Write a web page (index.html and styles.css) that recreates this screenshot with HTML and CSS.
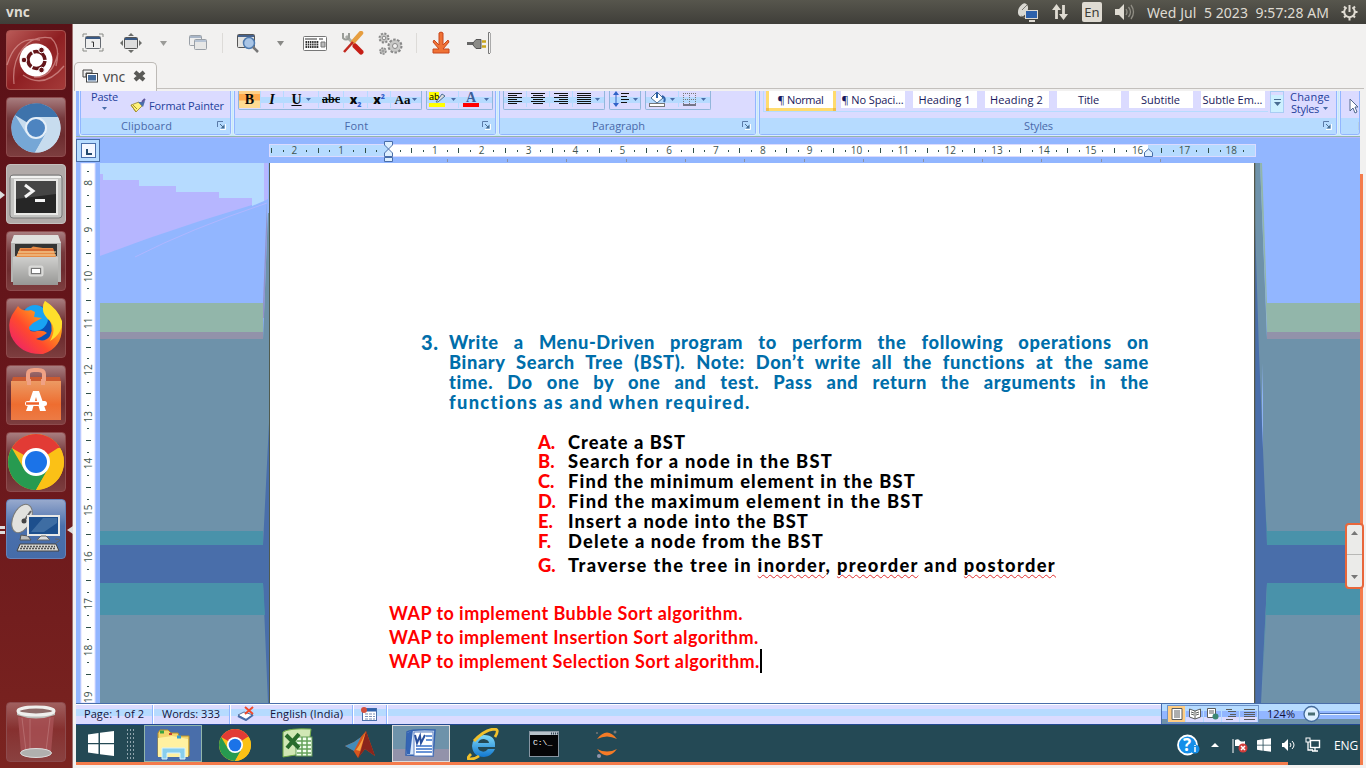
FILE: index.html
```html
<!DOCTYPE html>
<html lang="en">
<head>
<meta charset="utf-8">
<title>vnc</title>
<link rel="stylesheet" href="styles.css">
</head>
<body>
<svg width="0" height="0" class="defs">
  <defs>
    <linearGradient id="steel" x1="0" y1="0" x2="0" y2="1"><stop stop-color="#cfcfcd"/><stop offset="1" stop-color="#979795"/></linearGradient>
    <linearGradient id="bag" x1="0" y1="0" x2="0" y2="1"><stop stop-color="#ec9a63"/><stop offset=".6" stop-color="#ee6d30"/><stop offset="1" stop-color="#ec7b45"/></linearGradient>
    <linearGradient id="fox" x1="0" y1="1" x2="1" y2="0"><stop stop-color="#e8147f"/><stop offset=".4" stop-color="#ff4a2d"/><stop offset=".7" stop-color="#ffa11a"/><stop offset="1" stop-color="#fff04a"/></linearGradient>
    <linearGradient id="blue" x1="0" y1="0" x2="0" y2="1"><stop stop-color="#7fd9f8"/><stop offset="1" stop-color="#1178d0"/></linearGradient>
    <symbol id="chrome" viewBox="0 0 56 56">
      <circle cx="28" cy="28" r="28" fill="#f7c01c"/>
      <path d="M28 28 3.8 14A28 28 0 0 1 52.2 14Z" fill="#e23b35"/><path d="M28 14H52.2L28 28Z" fill="#e23b35"/>
      <path d="M3.8 14A28 28 0 0 0 28 56L40 35 28 28 16 35Z" fill="#279a50"/>
      <path d="M28 56 40 35 28 28 50 14H52.2A28 28 0 0 1 28 56Z" fill="#fbc116"/>
      <circle cx="28" cy="28" r="14" fill="#fff"/><circle cx="28" cy="28" r="11" fill="#1b73e8"/>
    </symbol>
    <symbol id="drop" viewBox="0 0 5 3"><path d="M0 0H5L2.5 3Z" fill="#496eaa"/></symbol>
    <symbol id="launch" viewBox="0 0 9 9"><path d="M.5 6V.5H6" fill="none" stroke="#5a7aa8"/><path d="M3 3 6 6" stroke="#496e92"/><path d="M3 8.500H8.500V3" fill="none" stroke="#fff"/><path d="M7.500 3.500V7.500H3.500Z" fill="#496e92"/></symbol>
    <symbol id="flagwin" viewBox="0 0 26 25"><path d="M0 3.500 10.500 2V12H0ZM12 1.800 26 0V12H12ZM0 13.300H10.500V23L0 21.500ZM12 13.300H26V25L12 23.200Z" fill="#fff"/></symbol>
  </defs>
</svg>

<header class="panel">
  <b class="panel-title fit" data-w="24">vnc</b>
  <div class="indicators">
    <svg width="22" height="20" class="ind-dish"><ellipse cx="6" cy="8" rx="4.500" ry="7" transform="rotate(25 6 8)" fill="#d9d8d2"/><path d="M5 8 10 3M4 14l5 2" stroke="#77766f"/><rect x="8.500" y="8.500" width="12" height="8" fill="#2d61ab" stroke="#dedad2"/><path d="M12 19h6" stroke="#dedad2" stroke-width="2"/></svg>
    <svg width="18" height="16" class="ind-net"><path d="M5.500 15V4M12.500 1v11" stroke="#dfdbd2" stroke-width="2.800"/><path d="M1 6 5.500 0 10 6ZM8 10l4.500 6L17 10Z" fill="#dfdbd2"/></svg>
    <span class="ind-lang">En</span>
    <svg width="21" height="18" class="ind-vol"><path d="M1 6h4l5-5v16l-5-5H1Z" fill="#dfdbd2"/><path d="M12 6q2 3 0 6M14.500 4q4 5 0 10M17 2q5 7 0 14" fill="none" stroke="#8f8d84" stroke-width="1.300"/></svg>
    <span class="clock fit" data-w="182">Wed Jul&nbsp; 5 2023&nbsp; 9:57:28 AM</span>
    <svg width="17" height="18" viewBox="0 0 17 18"><g fill="none" stroke="#dfdbd2"><path d="M5.500 4.500A5.300 5.300 0 1 0 11.500 4.500" stroke-width="2"/><path d="M8.500 2v7" stroke-width="2"/><path d="M.5 9h3M13.500 9h3M3 3.500l2 2M12 5.500l2-2M3 14.500l2-2M12 12.500l2 2M8.500 14v3.500" stroke-width="2"/></g></svg>
  </div>
</header>

<div class="desktop">
  <nav class="launcher">
    <div class="tile dash"><svg width="60" height="60"><g fill="none" stroke="#eab5b0" opacity=".55" stroke-width="1.300"><path d="M8 54C5 25 22 4 45 8Q55 17 50 36M1 35Q10 5 34 10M17 45Q38 60 58 36M28 47Q46 49 52 23"/></g><circle cx="30" cy="30" r="16.500" fill="#fff"/><circle cx="30.500" cy="30" r="8.500" fill="none" stroke="#641519" stroke-width="3.500" stroke-dasharray="16.300 1.500" stroke-dashoffset="-1"/><g fill="#641519" stroke="#fff"><circle cx="18" cy="30" r="2.800"/><circle cx="35.500" cy="20" r="2.800"/><circle cx="35.500" cy="40" r="2.800"/></g></svg></div>
    <div class="tile"><svg width="60" height="60"><circle cx="30" cy="31" r="24.500" fill="#c7dcee"/><path d="M30 31 9 18A24.500 24.500 0 0 1 52 20Z" fill="#3e73ab"/><path d="M9 18A24.500 24.500 0 0 0 29 55.500L40 36 20 36Z" fill="#76a7d6"/><path d="M52 20H30v11l10 5L29 55.500A24.500 24.500 0 0 0 52 20" fill="#c7dcee"/><circle cx="30" cy="31" r="10" fill="#4d84c0" stroke="#e5eff8" stroke-width="2"/></svg></div>
    <div class="tile grey"><i class="pip left"></i><svg width="60" height="60"><rect x="4" y="11" width="52" height="43" rx="3" fill="#c4c4c2" stroke="#777"/><path d="M5 12H55V14H5Z" fill="#f1f1ef"/><rect x="8" y="15" width="44" height="36" fill="#e8e8e6"/><rect x="13.500" y="18.500" width="44" height="35" fill="#262626" transform="translate(0 0)" display="none"/><rect x="14" y="19" width="0" height="0"/><rect x="10" y="17" width="40" height="32" fill="#262626"/><path d="M10 17H50V30L10 35Z" fill="#454545"/><path d="m19 22 8 6-8 6" fill="none" stroke="#f5f5f5" stroke-width="3" transform="translate(0 -1)"/><path d="M29 36.500H39" stroke="#f5f5f5" stroke-width="3"/></svg></div>
    <div class="tile"><svg width="60" height="60"><path d="M8 4H52L55 12V51H5V12Z" fill="#b5b5b3"/><path d="M5 12 8 4H52L55 12Z" fill="#e0e0de"/><path d="M9 13H51V25H9Z" fill="#343434"/><path d="M14 17 25 17 27 15.500 37 17 47 17 50 26H10Z" fill="#e78b45"/><path d="M15 19H48" stroke="#c94f24"/><path d="M12 21H50M11 24H50" stroke="#f3d6a4"/><path d="M7 26H52V54H7Z" fill="url(#steel)"/><rect x="23.500" y="35.500" width="13" height="9" rx="1.500" fill="none" stroke="#dadad8" stroke-width="2"/><rect x="25.500" y="37.500" width="9" height="5" fill="#fff" stroke="#777"/></svg></div>
    <div class="tile"><svg width="60" height="60"><circle cx="31" cy="31" r="23" fill="#0a4fb5"/><circle cx="29" cy="20" r="13" fill="#19a3f3"/><path d="M6 17 12 8Q16 14 25 12L29 14 28 19 36 20 27 25 23 29Q23 35 31 33 38 32 41 35 36 39 30 41 39 45 44 38 49 27 40 17 35 8 39 3 55 14 56 29 56 50 37 56 14 57 5 38 1 26 6 17Z" fill="url(#fox)"/><path d="M39 3Q33 14 44 23 51 31 44 43 57 35 56 23 52 11 39 3Z" fill="#ffdf2b"/></svg></div>
    <div class="tile"><svg width="60" height="60"><path d="M7 12H54L55 18H5Z" fill="#cb5a31"/><path d="M22 20V9Q22 5 28 5H32Q38 5 38 9V20" fill="none" stroke="#f0a184" stroke-width="4"/><path d="M5 16H55V55H5Z" fill="url(#bag)"/><path d="M23 14v6M37 14v6" stroke="#f0a184" stroke-width="4"/><path d="M20 46 27 26H33L40 46H34L30 32 26 46Z" fill="#fff"/><rect x="19" y="36" width="22" height="5" rx="2.500" fill="#fff"/><path d="M20 38.500H33" stroke="#ef6028" stroke-width="2.500"/></svg></div>
    <div class="tile"><svg width="60" height="60"><use href="#chrome" x="2" y="2" width="56" height="56"/></svg></div>
    <div class="tile vnc"><i class="pip left two"></i><i class="pip right"></i><svg width="60" height="60"><path d="M15 36 22 37 25 41H14Z" fill="#bdbdba" stroke="#555"/><ellipse cx="16" cy="19.500" rx="9" ry="15" transform="rotate(25 16 19.500)" fill="#e2e2de" stroke="#7a7a77"/><path d="m18 22 7-10" stroke="#666" stroke-width="2"/><circle cx="18" cy="22" r="2.500" fill="#444"/><rect x="22" y="17" width="31" height="19" fill="#1d4f8d" stroke="#e9e9e7" stroke-width="2"/><path d="m25 33 12-14H51V24L38 33Z" fill="#5a86b7" opacity=".55"/><path d="M31 41 35 37H40L44 41Z" fill="#ddd" stroke="#666"/><path d="M14 45H50L53 52H11Z" fill="#d9d9d5" stroke="#444"/><path d="M15 47.500H49M14 49.500H50" stroke="#555" stroke-width="1.300" stroke-dasharray="2 1"/><path d="M49 40Q58 40 50 44" fill="none" stroke="#666"/></svg></div>
    <div class="tile trash"><svg width="60" height="60"><path d="M12 15H48L45 51Q30 57 15 51Z" fill="#ab5458" opacity=".75"/><path d="M16 16 20 49M24 17v33M44 16 40 49" stroke="#c8898a" opacity=".5"/><ellipse cx="30" cy="51" rx="15.500" ry="4.500" fill="#b0b0ae" stroke="#ddd"/><path d="M11 7V13Q30 20 49 13V7Z" fill="#bcbcb8"/><ellipse cx="30" cy="9" rx="18" ry="4" fill="#8d6b69" stroke="#efefed" stroke-width="3"/></svg></div>
  </nav>

  <main class="window">
    <div class="toolbar">
      <svg width="22" height="20"><path d="M1 4V1H5M17 1h4v3M1 15v3h4M17 18h4v-3" fill="none" stroke="#888a85"/><rect x="3.500" y="3.500" width="15" height="12" rx="1" fill="#eee" stroke="#666b72"/><path d="M4 5H18" stroke="#3b5a84" stroke-width="2"/><path d="M9.500 9h2v5" fill="none" stroke="#333"/></svg>
      <svg width="24" height="20"><rect x="5.500" y="4.500" width="13" height="11" rx="1" fill="#ddd" stroke="#555"/><path d="M6 6H18" stroke="#3b5a84" stroke-width="2"/><path d="M1 10 4 7v6ZM23 10 20 7v6ZM12 0 9 3h6ZM12 20 9 17h6Z" fill="#6d6e6b"/></svg>
      <svg width="7" height="5"><path d="M0 0H7L3.500 5Z" fill="#9b9b98"/></svg>
      <svg width="20" height="18"><rect x="1.500" y="1.500" width="12" height="10" rx="1" fill="#eee" stroke="#9aa0a7"/><path d="M2 3H13" stroke="#a8b5c7" stroke-width="2"/><rect x="6.500" y="5.500" width="12" height="10" rx="1" fill="#e7e7e6" stroke="#9aa0a7"/><path d="M7 7H18" stroke="#b6c3d4" stroke-width="2"/></svg>
      <i class="tool-sep"></i>
      <svg width="24" height="20"><rect x="1.500" y="1.500" width="17" height="13" rx="1" fill="#e3e3e1" stroke="#555"/><path d="M2 3H18" stroke="#45618b" stroke-width="2"/><circle cx="13" cy="10" r="5.500" fill="#a9c5e6" stroke="#507cb0" stroke-width="1.500"/><path d="m17 14 5 5" stroke="#777" stroke-width="2.500"/></svg>
      <svg width="7" height="5"><path d="M0 0H7L3.500 5Z" fill="#898986"/></svg>
      <svg width="24" height="15"><rect x=".5" y=".5" width="23" height="14" rx="1" fill="#fff" stroke="#777"/><path d="M2 3H14M16 3H20" stroke="#333"/><path d="M2.500 6H16M2.500 8.500H16M2.500 11H16" stroke="#333" stroke-width="1.800" stroke-dasharray="1.500 .7"/><path d="M18 6h4v5h-4Z" fill="#bbb" stroke="#777"/></svg>
      <svg width="24" height="24"><path d="m5 5 13 13" stroke="#a9aca7" stroke-width="3"/><path d="M2 2v5q3 3 6 0V2" fill="none" stroke="#999c97" stroke-width="2"/><path d="m12 11 8-9" stroke="#e69e40" stroke-width="4.500" stroke-linecap="round"/><path d="M12 11 3 21" stroke="#c2281e" stroke-width="2.500"/><path d="m14 15 6 6" stroke="#c61e16" stroke-width="5" stroke-linecap="round"/></svg>
      <svg width="26" height="25"><g fill="#c8c8c6" stroke="#888" stroke-width="1"><circle cx="7" cy="7" r="4.500" stroke-width="2" stroke-dasharray="2 1.500"/><circle cx="18" cy="15" r="6.500" stroke-width="2" stroke-dasharray="2.500 1.500"/><circle cx="6" cy="20" r="3" stroke-width="1.500" stroke-dasharray="2 1"/></g><g fill="#f2f1f0" stroke="#888"><circle cx="7" cy="7" r="1.800"/><circle cx="18" cy="15" r="2.500"/><circle cx="6" cy="20" r="1"/></g></svg>
      <i class="tool-sep"></i>
      <svg width="20" height="24"><path d="M8 2Q10 0 12 2V14L17 9 18 11 12 18H18V22H2V18H8L2 11 3 9 8 14Z" fill="#ef7235" stroke="#c8471c"/></svg>
      <svg width="26" height="24"><path d="M1 12.500H8" stroke="#666" stroke-width="3"/><path d="M7 12 10 8.500H15V17.500H10L7 14Z" fill="#8b8b87" stroke="#555"/><path d="M16 10.500h4M16 15.500h4" stroke="#c9a51c" stroke-width="2.500"/><path d="M24 1.500H22.500V22.500H24" fill="none" stroke="#777"/><path d="M24.500 2V22" stroke="#aaa"/></svg>
    </div>

    <div class="tabs"><div class="tab">
      <svg width="17" height="14"><path d="M1 1H10V4H4V8H1Z" fill="#eee" stroke="#444"/><rect x="4.500" y="4.500" width="11" height="8.500" fill="#456c9c" stroke="#444"/><rect x="5.500" y="5.500" width="9" height="6.500" fill="none" stroke="#fff"/></svg>
      <span class="fit" data-w="22">vnc</span>
      <svg width="13" height="12" class="close"><path d="m2 2 9 8M11 2 2 10" stroke="#5a5a57" stroke-width="4"/></svg>
    </div><div class="tabline"></div></div>

    <section class="remote">
      <div class="ribbon">
        <div class="group clipboard"><div class="body">
          <div class="paste"><span class="fit" data-w="27">Paste</span><svg width="5" height="3"><use href="#drop"/></svg></div>
          <svg width="17" height="15" class="brush"><path d="m9 4 3 4-6 6-5-7Z" fill="#fff27a" stroke="#a8984b"/><path d="m3 7 4 4M1 7l5 7" stroke="#a59129"/><path d="m8 4 5 5 2-6-3 1Z" fill="#496eaa"/><path d="m12 4 3-3" stroke="#5c559c" stroke-width="2"/></svg>
          <span class="fp fit" data-w="75">Format Painter</span>
        </div><div class="caption"><span class="fit" data-w="51">Clipboard</span><svg class="dlg"><use href="#launch"/></svg></div></div>

        <div class="group font"><div class="body">
          <div class="bbox">
            <span class="cell serif hot w22"><b>B</b></span><span class="cell serif w23"><i><b>I</b></i></span><span class="cell serif w35"><b><u>U</u></b><svg width="5" height="3"><use href="#drop"/></svg></span><span class="cell serif small w25"><s>abc</s></span><span class="cell small w24"><b>x<sub>2</sub></b></span><span class="cell small w23"><b>x<sup>2</sup></b></span><span class="cell serif aa w30"><b>Aa</b><svg width="5" height="3"><use href="#drop"/></svg></span>
          </div>
          <div class="bbox">
            <span class="cell w32"><svg width="18" height="18"><rect width="10" height="8" y="1" fill="#ff0"/><text x="0" y="9" font-size="9" font-family="Noto Sans">ab</text><path d="m7 11 6-8 3 2-7 6Z" fill="#ddd" stroke="#496e92"/><rect y="12" width="16" height="4" fill="#ff0"/></svg><svg width="5" height="3"><use href="#drop"/></svg></span><span class="cell w33"><svg width="18" height="18"><text x="4" y="11" font-size="14" font-weight="bold" font-family="Liberation Serif" fill="#3d5f9a">A</text><rect x="1" y="12" width="16" height="4" fill="#f00"/></svg><svg width="5" height="3"><use href="#drop"/></svg></span>
          </div>
        </div><div class="caption"><span class="fit" data-w="24">Font</span><svg class="dlg"><use href="#launch"/></svg></div></div>

        <div class="group para"><div class="body">
          <div class="bbox">
            <span class="cell w23"><svg width="14" height="14"><path d="M0 1.500H14M0 3.500H9M0 5.500H14M0 7.500H9M0 9.500H14M0 11.500H9"/></svg></span><span class="cell w23"><svg width="14" height="14"><path d="M0 1.500H14M2 3.500H12M0 5.500H14M2 7.500H12M0 9.500H14M2 11.500H12"/></svg></span><span class="cell w23"><svg width="14" height="14"><path d="M0 1.500H14M5 3.500H14M0 5.500H14M5 7.500H14M0 9.500H14M5 11.500H14"/></svg></span><span class="cell w31"><svg width="14" height="14"><path d="M0 1.500H14M0 3.500H14M0 5.500H14M0 7.500H14M0 9.500H14M0 11.500H14"/></svg><svg width="5" height="3"><use href="#drop"/></svg></span>
          </div>
          <div class="bbox"><span class="cell w30"><svg width="16" height="16"><path d="M8 2.500H16M8 5.500H14M8 8.500H16M8 11.500H14"/><path d="M3 3V13" style="stroke:#3163c8"/><path d="M0 4 3 0 6 4ZM0 12l3 4 3-4Z" fill="#3163c8" style="stroke:none"/></svg><svg width="5" height="3"><use href="#drop"/></svg></span></div>
          <div class="bbox"><span class="cell w33"><svg width="17" height="16"><path d="m2 7 6-6 6 6-6 5Z" fill="#fff" style="stroke:#496e92"/><path d="m8 1 0 6M13 5q4 2 2 6" fill="none" style="stroke:#3163aa;stroke-width:2"/><rect x=".5" y="12.500" width="15" height="3" fill="#fff" style="stroke:#777"/></svg><svg width="5" height="3"><use href="#drop"/></svg></span><span class="cell w31"><svg width="14" height="14"><path d="M.5 1V13M6.500 1V13M12.500 1V13M0 1.500H13M0 7.500H13" stroke-dasharray="1 1" style="stroke:#777"/><path d="M0 13H13"/></svg><svg width="5" height="3"><use href="#drop"/></svg></span></div>
        </div><div class="caption"><span class="fit" data-w="53">Paragraph</span><svg class="dlg"><use href="#launch"/></svg></div></div>

        <div class="group styles"><div class="body">
          <div class="gallery">
            <span class="style chosen"><span class="fit" data-w="46">¶ Normal</span></span><span class="style"><span class="fit" data-w="62">¶ No Spaci...</span></span><span class="style"><span class="fit" data-w="52">Heading 1</span></span><span class="style"><span class="fit" data-w="53">Heading 2</span></span><span class="style"><span class="fit" data-w="21">Title</span></span><span class="style"><span class="fit" data-w="39">Subtitle</span></span><span class="style"><span class="fit" data-w="60">Subtle Em...</span></span>
          </div>
          <span class="more"><svg width="7" height="7"><path d="M0 .5H7" stroke="#496e92"/><path d="M0 3H7L3.500 7Z" fill="#496e92"/></svg></span>
          <div class="change"><span class="fit" data-w="40">Change</span><div><span class="fit" data-w="28">Styles</span><svg width="5" height="3"><use href="#drop"/></svg></div></div>
        </div><div class="caption"><span class="fit" data-w="29">Styles</span><svg class="dlg"><use href="#launch"/></svg></div></div>

        <div class="group editing"><div class="body"><svg width="10" height="16"><path d="M1 1V13L4 10 6 15 8 14 6 9H9Z" fill="#fff" stroke="#53688d"/></svg></div><div class="caption">Editing</div></div>
      </div>

      <div class="hrule-row"><span class="tabstop"><i></i></span><svg id="hrule" width="1260" height="24"></svg></div>

      <div class="workspace">
        <svg id="vrule" width="24" height="540"></svg>
        <svg width="170" height="540" class="wall">
          <rect width="170" height="540" fill="#92b6ff"/>
          <path d="M0 0H164V38L152 43V35H119V29H76V23H39V17H3V11H0Z" fill="#b6dbff"/>
          <path d="M0 11H3V17H39V23H76V29H119V35H152V42L100 58Q50 74 0 93Z" fill="#b6b6ff"/>
          <path d="M164 0H168V36L164 38Z" fill="#b6b6ff"/>
          <path d="M35 94Q90 66 167 40" stroke="#b6b6ff" fill="none" stroke-width=".8"/>
          <rect y="140" width="163" height="29" fill="#92b6aa"/><rect y="169" width="163" height="7" fill="#9292aa"/>
          <path d="M0 176H163L168 50H170V540H0Z" fill="#6e92aa"/>
          <path d="M163 140 167 38V70L164 155H163Z" fill="#9292ca"/>
          <path d="M0 368H163V382H0Z" fill="#4992aa"/>
          <path d="M0 382H163L169 260V540H168L163 420H0Z" fill="#496eaa"/>
          <path d="M0 420H163L165 452H0Z" fill="#4992aa"/>
          <path d="M169.500 0V540" stroke="#505b50"/>
        </svg>
        <article class="page">
          <div class="question"><span class="num">3.</span>
            <div class="prompt"><p>Write a Menu-Driven program to perform the following operations on</p><p>Binary Search Tree (BST). Note: Don’t write all the functions at the same</p><p>time. Do one by one and test. Pass and return the arguments in the</p><p class="last"><span class="fit" data-w="302">functions as and when required.</span></p></div>
          </div>
          <div class="ops">
            <div><b>A.</b><span class="fit" data-w="118">Create a BST</span></div>
            <div class="tight"><b>B.</b><span class="fit" data-w="265">Search for a node in the BST</span></div>
            <div><b>C.</b><span class="fit" data-w="348">Find the minimum element in the BST</span></div>
            <div><b>D.</b><span class="fit" data-w="356">Find the maximum element in the BST</span></div>
            <div><b>E.</b><span class="fit" data-w="241">Insert a node into the BST</span></div>
            <div><b>F.</b><span class="fit" data-w="256">Delete a node from the BST</span></div>
            <div class="loose"><b>G.</b><span class="fit" data-w="488">Traverse the tree in <span class="typo">inorder</span>, <span class="typo">preorder</span> and <span class="typo">postorder</span></span></div>
          </div>
          <div class="wap">
            <div><span class="fit" data-w="354">WAP to implement Bubble Sort algorithm.</span></div>
            <div><span class="fit" data-w="370">WAP to implement Insertion Sort algorithm.</span></div>
            <div><span class="fit" data-w="371">WAP to implement Selection Sort algorithm.</span><i class="caret"></i></div>
          </div>
        </article>
        <svg width="106" height="540" class="wall">
          <rect width="106" height="540" fill="#92b6ff"/>
          <path d="M0 0H6L13 176H106V368H13L8 200 9 540H0Z" fill="#6e92aa"/>
          <path d="M6 0H8L13 140H106V169H13Z" fill="#92b6aa"/><rect x="13" y="169" width="93" height="7" fill="#9292aa"/>
          <path d="M9 176H106V540H9Z" fill="#6e92aa"/>
          <path d="M10 330 13 368H106V382H13Z" fill="#4992aa"/>
          <path d="M1 60 5 190 13 382H106V420H13L7 540H1Z" fill="#496eaa"/>
          <path d="M13 420H106V452H12L8 530Z" fill="#4992aa"/>
          <path d="M.5 0V540" stroke="#55584a" stroke-width="1.500"/>
        </svg>
      </div>

      <div class="status">
        <div class="st page-no"><span class="fit" data-w="60">Page: 1 of 2</span></div>
        <div class="st words"><span class="fit" data-w="58">Words: 333</span></div>
        <div class="st lang"><svg width="18" height="15"><path d="m1 9 6-3 9 3-7 5Z" fill="#fff" stroke="#5d7195"/><path d="m1 10 8 4 7-5" fill="none" stroke="#496eaa" stroke-width="2"/><path d="m8 1 8 7M16 1 8 8" stroke="#f24a2a" stroke-width="2"/></svg><span class="fit" data-w="73">English (India)</span></div>
        <div class="st macro"><svg width="16" height="14"><rect x="1.500" y="1.500" width="14" height="12" fill="#fff" stroke="#496eaa"/><path d="M2 3H15" stroke="#3163aa" stroke-width="3"/><path d="M4 7H14M4 9.500H14M4 12H14" stroke="#7b8fb5" stroke-dasharray="3 1"/><circle cx="3" cy="3" r="3" fill="#d4503e"/></svg></div>
        <div class="viewbar">
          <div class="views"><span class="on"><svg width="12" height="12"><path d="M1 .5H11V11.500H1ZM3 3H9M3 5H9M3 7H9M3 9H9"/></svg></span><span><svg width="12" height="12"><path class="sheet" d="M.5 1 6 3 11.500 1V9L6 11 .5 9ZM6 3V11M2 4 5 5M2 6 5 7M7 5 10 4M7 7 10 6"/></svg></span><span><svg width="12" height="12"><path class="sheet" d="M.5.5H8.500V9.500H.5ZM2 3H7M2 5H7"/><circle cx="8.500" cy="8.500" r="3" fill="#3c8774"/></svg></span><span><svg width="12" height="12"><path d="M1 1.500H7M3 3.500H11M5 6.500H11M3 8.500H11M1 11.500H8"/></svg></span><span><svg width="12" height="12"><path d="M1 1.500H12M1 4.500H12M1 6.500H12M1 8.500H12M1 11.500H12"/></svg></span></div>
          <span class="zoom fit" data-w="28">124%</span>
          <svg width="57" height="18"><path d="M17 8.500H57" stroke="#4b6ea9"/><path d="M17 9.500H57" stroke="#e9f4ff"/><circle cx="8.500" cy="9" r="7.500" fill="#dff0ff" stroke="#446b9b" stroke-width="1.300"/><path d="M5 9H12" stroke="#496e73" stroke-width="3"/></svg>
        </div>
      </div>

      <div class="taskbar">
        <div class="app start"><svg width="26" height="25"><use href="#flagwin"/></svg></div>
        <div class="grip"></div>
        <div class="app explorer"><svg width="34" height="32"><path d="M2 5 4 2H12L15 5H22L23 8H33V28H2Z" fill="#f4d66e" stroke="#b78f2b"/><path d="M2 10 16 8 32 11V29H2Z" fill="#fff1a1"/><path d="M4 4h4" stroke="#39a541" stroke-width="3"/><path d="M13 6h3" stroke="#c83f31" stroke-width="2"/><path d="M21 9h4" stroke="#359ed4" stroke-width="3"/><path d="M6 31V20H29V31H24V25H11V31Z" fill="#88ceed" stroke="#d7f3ff"/></svg></div>
        <div class="app chrome"><svg width="32" height="32"><use href="#chrome"/></svg></div>
        <div class="app"><svg width="32" height="31"><path d="M2 4Q8 0 30 1L27 25 2 29Z" fill="#d1e7b5" stroke="#6ea845"/><rect x="15" y="9" width="16" height="19" fill="#f3fff0" stroke="#639c57"/><path d="M16 13H30M16 17H30M16 21H30M16 25H30M21 9V28M26 9V28" stroke="#65a25a" stroke-width="1.500"/><path d="m5 7 13 13M18 6 6 20" stroke="#296b2c" stroke-width="4"/></svg></div>
        <div class="app matlab"><svg width="32" height="30"><path d="M1 17 10 13 16 9 22 2 31 27 21 20 14 29 9 21Z" fill="#d6551d"/><path d="M1 17 10 13 17 8 10 22Z" fill="#448bb8"/><path d="m22 2-5 19-3 8 7-9 10 7Z" fill="#8b251c"/><path d="m22 2-6 20-4-1Q18 13 22 2Z" fill="#f7a141"/></svg></div>
        <div class="app word"><svg width="32" height="31"><path d="M2 4Q7 1 30 2L28 28 1 27Z" fill="#d9e8fa" stroke="#3462af" stroke-width="1.500"/><path d="M2 5 8 2 5 26H2Z" fill="#3465b5"/><rect x="9" y="4" width="19" height="24" fill="#fff" stroke="#5a7ec0"/><path d="M21 8H27M21 12H27M11 18H27M11 21H27M11 24H27" stroke="#3971c9" stroke-width="1.500"/><path d="m10 7 2 8 3-7 1 7 4-8" fill="none" stroke="#274f9d" stroke-width="2"/></svg></div>
        <div class="app ie"><svg width="32" height="32"><path d="M11 19H28Q29 7 17 7 6 8 5 18 6 29 17 29 25 28 28 21H21Q18 25 14 23 11 22 11 19" fill="url(#blue)"/><path d="M11 15Q12 11 17 11 22 12 22 15Z" fill="#244955"/><path d="M4 26Q-2 32 4 31 8 31 12 28M7 13Q17 2 27 1 33 1 28 9" fill="none" stroke="#f1c12c" stroke-width="2.800"/></svg></div>
        <div class="app cmd"><svg width="30" height="26"><rect x=".5" y=".5" width="29" height="25" fill="#050507" stroke="#8795a2"/><path d="M1 2.500H29" stroke="#b8c2ca" stroke-width="3"/><path d="M22 2.500H29" stroke="#345" stroke-width="2" stroke-dasharray="1 1"/><text x="4" y="14" font-size="8" font-family="Liberation Mono" fill="#fff">C:\_</text></svg></div>
        <div class="app jup"><svg width="24" height="30"><path d="M2 10Q12-3 22 10 12 5 2 10ZM2 20Q12 33 22 20 12 25 2 20Z" fill="#f57b26"/><circle cx="20" cy="3" r="1.500" fill="#777"/><circle cx="4" cy="27" r="2" fill="#9195aa"/><circle cx="2" cy="4" r="1" fill="#777"/></svg></div>
        <div class="tray">
          <svg width="24" height="22"><circle cx="10.500" cy="11" r="9.500" fill="#158fe9" stroke="#fff" stroke-width="1.800"/><text x="6" y="17" font-size="17" font-weight="bold" font-family="Open Sans" fill="#fff">?</text><circle cx="18" cy="15" r="4.500" fill="#138ee8"/><path d="M18 11v1M18 13v5" stroke="#fff" stroke-width="1.500"/></svg>
          <svg width="8" height="4" class="t-up"><path d="M0 4 4 0 8 4Z" fill="#fff"/></svg>
          <svg width="16" height="15" class="t-flag"><path d="M1 1V15" stroke="#fff"/><path d="M3 2q4-2 5 1 3 1 5 0V8H3Z" fill="#fff"/><circle cx="11" cy="10" r="4.500" fill="#d13d3b"/><path d="m9 8 4 4M13 8 9 12" stroke="#fff" stroke-width="1.500"/></svg>
          <svg width="14" height="14" class="t-win"><use href="#flagwin"/></svg>
          <svg width="15" height="14" class="t-vol"><path d="M1 5H3L7 1V13L3 9H1Z" fill="#fff"/><path d="M9 5q2 2 0 4M11 3q4 4 0 8" fill="none" stroke="#fff"/></svg>
          <svg width="16" height="16" class="t-net"><rect x="5.500" y="3.500" width="9" height="7" fill="none" stroke="#fff" stroke-width="1.400"/><path d="M10 11v3M7 14H13M3 5V13H8" fill="none" stroke="#fff" stroke-width="1.300"/><rect x="1" y="1" width="4" height="4" fill="#244955" stroke="#fff"/></svg>
          <span class="fit" data-w="24">ENG</span>
        </div>
      </div>
      <i class="scroll-x"></i><i class="scroll-y"></i>
    </section>
    <div class="thumb"><svg width="15" height="60"><path d="M4 10 7.500 6 11 10ZM4 50l3.500 4 3.500-4Z" fill="#777"/><path d="M0 29.500H15" stroke="#b8b8b6"/></svg></div>
  </main>
</div>
<script src="app.js"></script>
</body>
</html>
```
FILE: styles.css
```css
* { box-sizing: border-box; }
body { margin: 0; width: 1366px; height: 768px; overflow: hidden; background: #f2f1f0; font-family: "Open Sans", "Noto Sans", sans-serif; }
svg { display: block; flex: none; }
.defs { position: absolute; }
.fit { display: inline-block; white-space: nowrap; }

.panel { height: 24px; display: flex; justify-content: space-between; align-items: center; padding: 0 8px 0 6px; background: linear-gradient(#57564d, #3f3e39); color: #dfdbd2; font: 14px "Noto Sans", sans-serif; }
.panel-title { font-size: 13.5px; }
.indicators { display: flex; align-items: center; }
.ind-net { margin-left: 12px; }
.ind-lang { margin-left: 13px; width: 20px; height: 20px; background: #dfdbd2; color: #3c3b37; border-radius: 2px; text-align: center; line-height: 20px; font-size: 13px; }
.ind-vol { margin: 0 12px 0 12px; }
.clock { margin-right: 12px; }

.desktop { display: flex; height: 744px; }
.launcher { width: 73px; padding: 6px 0 6px 6px; display: flex; flex-direction: column; gap: 7px; background: linear-gradient(#5a1117, #6b181c 60%, #7b2420); border-right: 1px solid #a07572; }
.tile { position: relative; width: 60px; height: 60px; flex: none; border-radius: 4px; border: 1px solid #8d4b4d; background: linear-gradient(#a87d7f, #76393c 35%, #6d2c2f 65%, #7d3e3f); }
.tile > svg { margin: -1px; }
.dash { background: linear-gradient(135deg, #b95a57, #8e1f22 50%, #a43a39); border-color: #a8524f; }
.grey { background: #b1aaa8; border-color: #c5bfbd; }
.vnc { background: linear-gradient(#97a9cd, #4b70ac 45%, #456ca9); border-color: #6683b8; }
.trash { margin-top: auto; background: linear-gradient(#a0605f, #86302f 45%, #8a4140); }
.pip { position: absolute; top: 26px; border: solid transparent; border-width: 4px 0 4px 5px; border-left-color: #ddd; left: -7px; }
.pip.two { border: 0; width: 5px; height: 8px; border-top: 3px solid #ddd; border-bottom: 3px solid #ddd; }
.pip.right { left: 60px; border-width: 4px 6px 4px 0; border-right-color: #ddd; }

.window { position: relative; width: 1293px; height: 744px; background: #f2f1f0; }
.toolbar { height: 38px; display: grid; grid-template-columns: 39px 38px 26px 44px 4px 47px 18px 52px 24px 50px 3px 46px 30px; align-items: center; justify-items: center; }
.tool-sep { width: 1px; height: 20px; background: #dddbd8; }
.tabs { height: 29px; display: flex; }
.tab { margin-left: 1px; width: 83px; height: 29px; border: 1px solid #bdbab6; border-bottom: 0; border-radius: 5px 5px 0 0; background: #f7f6f5; display: flex; align-items: center; padding: 0 0 2px 7px; font: 14px "Noto Sans", sans-serif; color: #4c4c4c; }
.tab span { margin: 0 8px 0 4px; }
.tabline { width: 1207px; border-bottom: 1px solid #c3c0bd; margin-bottom: 2px; }

.remote { position: relative; width: 1290px; height: 674px; padding-left: 3px; background: #f2f1f0; overflow: hidden; }
.ribbon { width: 1284px; height: 47px; padding-left: 4px; display: flex; gap: 3px; background: #c8ebf5; border-bottom: 1px solid #b6b6ff; box-shadow: inset 0 -1px #92b6aa, inset 4px 0 #92b6ff; font-size: 11px; color: #243f9b; overflow: hidden; }
.group { flex: none; height: 44px; background: #dbdbff; border: 1px solid #92b6ff; border-width: 0 1px 1px; border-radius: 0 0 3px 3px; box-shadow: 0 0 0 1px #dbecff; }
.body { height: 27px; display: flex; align-items: flex-start; }
.caption { height: 16px; background: #b6dbff; color: #4969aa; text-align: center; line-height: 16px; position: relative; }
.dlg { width: 9px; height: 9px; position: absolute; right: 4px; top: 3px; }
.clipboard { width: 151px; } .font { width: 262px; } .para { width: 257px; } .styles { width: 578px; } .editing { width: 20px; overflow: hidden; }
.clipboard .caption { padding-right: 18px; } .font .caption { padding-right: 17px; } .para .caption { padding-right: 18px; } .styles .caption { padding-right: 19px; }
.paste { width: 27px; margin-left: 10px; line-height: 11px; display: flex; flex-direction: column; align-items: center; gap: 5px; }
.brush { margin: 7px 0 0 12px; } .fp { margin: 7px 0 0 2px; line-height: 16px; }
.font .body, .para .body { padding-left: 3px; gap: 4px; }
.bbox { display: flex; height: 19px; border: 1px solid #92b6db; border-top: 0; border-radius: 0 0 2px 2px; background: linear-gradient(#dbdbff 6px, #b6dbff 6px 12px, #dbdbff 12px); }
.cell { height: 17px; display: flex; align-items: center; justify-content: center; border-right: 1px solid #b6dbff; gap: 4px; color: #080808; font-size: 12px; }
.cell:last-child { border: 0; }
.serif { font-family: "Liberation Serif", serif; font-size: 14px; }
.small { font-size: 12px; font-weight: bold; }
.small sub, .small sup { font-size: 7px; color: #315fca; line-height: 0; }
.aa { font-size: 13px; gap: 2px; }
.hot { background: linear-gradient(#ffcf86 3px, #ffa94c 3px 9px, #ffdb92 10px); }
.w22 { width: 22px; } .w23 { width: 23px; } .w24 { width: 24px; } .w25 { width: 25px; } .w30 { width: 30px; } .w31 { width: 31px; } .w32 { width: 32px; } .w33 { width: 33px; } .w35 { width: 35px; }
.para .cell { height: 16px; }
.para .cell path { stroke: #111; }
.gallery { height: 21px; display: flex; gap: 8px; padding-left: 5px; margin-left: 3px; width: 505px; border-bottom: 1px solid #b6dbff; border-left: 1px solid #b6dbff; }
.style { width: 64px; height: 17px; background: #fff; display: flex; justify-content: center; line-height: 17px; color: #18185b; }
.style .fit { margin-left: -1px; }
.chosen { box-shadow: -3px 0 #ffdb6e, 3px 0 #ffdb6e, 0 3px #ffdb6e, -3px 3px #f2bd49, 3px 3px #f2bd49; }
.more { width: 14px; height: 22px; margin-left: 2px; border: 1px solid #a9cdf4; background: linear-gradient(#dbdbff 3px, #cdf0ff 3px); display: flex; align-items: center; justify-content: center; }
.change { margin-left: 6px; line-height: 11px; } .change > span { display: block; width: max-content; } .change div { display: flex; align-items: center; gap: 4px; padding-left: 1px; line-height: 13px; }
.editing svg { margin: 7px 0 0 8px; } .editing .caption { padding-left: 17px; }

.hrule-row { display: flex; width: 1284px; height: 25px; background: #92b6ff; }
.tabstop { width: 24px; height: 23px; margin-top: 1px; border: 1px solid #496eaa; background: #b6dbff; padding: 3px 0 0 4px; }
.tabstop i { display: block; width: 15px; height: 15px; border: 1px solid #496eaa; background: linear-gradient(90deg, #24496e 2px, transparent 2px) 4px 5px / 6px 6px no-repeat, linear-gradient(#24496e, #24496e) 4px 9px / 6px 2px no-repeat, #f4f7ff; }
.workspace { display: flex; width: 1284px; height: 540px; }

.page { width: 984px; height: 540px; background: #fff; padding: 169px 0 0 119px; font-family: Lato, sans-serif; font-size: 18.3px; flex: none; }
.question { display: flex; color: #006eaa; font-weight: 900; padding-left: 32px; }
.num { width: 28px; font-size: 20px; line-height: 20px; letter-spacing: .6px; }
.prompt { width: 700px; }
.prompt p { margin: 0; height: 20px; line-height: 20px; white-space: nowrap; text-align-last: justify; letter-spacing: .6px; }
.prompt .last { text-align-last: left; letter-spacing: 0; }
.ops { padding: 20px 0 0 149px; font-weight: 900; color: #000; }
.ops div { display: flex; height: 20px; line-height: 20px; }
.ops b { width: 30px; color: #f00; font-weight: 900; }
.ops .tight { margin-top: -1px; }
.ops .loose { padding-top: 4px; height: 25px; }
.typo { text-decoration: underline wavy #e03030 1px; text-underline-offset: 2px; text-decoration-skip-ink: none; }
.wap { padding-top: 25px; color: #f00; font-weight: 700; font-size: 18px; }
.wap div { height: 24px; line-height: 24px; display: flex; }
.caret { width: 2px; height: 24px; background: #000; }

.status { width: 1284px; height: 22px; display: flex; border-top: 1px solid #496eaa; border-bottom: 1px solid #244992; background: linear-gradient(#fff 1px, #dbdbff 1px 5px, #b6dbff 5px 12px, #dbdbff 12px); font-size: 11px; color: #14143b; align-items: center; }
.st { height: 19px; display: flex; align-items: center; border-right: 1px solid #92b6ff; box-shadow: 1px 0 #fff; padding: 0 0 1px 8px; flex: none; }
.page-no { width: 77px; } .words { width: 77px; padding-left: 9px; } .lang { width: 123px; gap: 15px; padding-left: 7px; } .macro { width: 34px; }
.viewbar { margin-left: auto; width: 199px; height: 20px; border-left: 1px solid #496eaa; background: linear-gradient(#b6dbff 7px, #92b6ff 7px 15px, #6e92aa 15px); display: flex; align-items: center; padding: 0 0 1px 5px; }
.views { display: flex; width: 93px; height: 18px; border: 1px solid #6e92c8; background: linear-gradient(#b6dbff 5px, #92b6ff 5px 11px, #dbdbff 11px); }
.views span { width: 18px; display: flex; align-items: center; justify-content: center; border-right: 1px solid #b6dbff; }
.views .on { background: #ffcd83; } .views path { fill: none; stroke: #5b5d5c; } .views .on path, .views .sheet { fill: #fff; }
.zoom { margin: 0 8px 0 8px; }

.taskbar { width: 1284px; height: 40px; background: #244955; display: flex; }
.app { width: 62px; height: 37px; display: flex; align-items: center; justify-content: center; flex: none; }
.start { width: 50px; }
.grip { width: 8px; height: 31px; margin-top: 3px; background: radial-gradient(circle, #8fa4ad .6px, transparent 1.1px) 0 0 / 3px 4px; }
.explorer { width: 58px; margin-left: 10px; background: #496eaa; border: 1px solid #92b6aa; }
.chrome { width: 64px; padding: 2px 0 0 2px; }
.matlab { width: 64px; }
.word { width: 58px; background: linear-gradient(#6e92aa 65%, #9292aa 65%); border: 1px solid #dbdbdb; }
.ie { width: 66px; } .cmd { width: 56px; } .jup { width: 70px; }
.tray { margin-left: auto; display: flex; align-items: center; height: 40px; padding-right: 2px; color: #fff; font-size: 12px; }
.t-up { margin-left: 10px; } .t-flag { margin-left: 13px; } .t-win { margin-left: 9px; } .t-vol { margin-left: 10px; } .t-net { margin: 0 13px 0 9px; }

.scroll-x { position: absolute; left: 3px; bottom: 0; width: 1212px; height: 3px; background: #f47b4b; }
.scroll-y { position: absolute; right: 0; top: 83px; width: 3px; height: 591px; background: #f47b4b; }
.thumb { position: absolute; left: 1272px; top: 499px; width: 19px; height: 66px; border: 2px solid #e9673b; border-radius: 4px; background: #ebebe9; }
```
FILE: app.js
```js
document.querySelectorAll('.fit').forEach(function (el) {
  var natural = el.getBoundingClientRect().width;
  var spacing = (Number(el.dataset.w) - natural) / el.textContent.length;
  el.style.letterSpacing = spacing + 'px';
});

function label(x, y, value, turn) {
  return '<text x="' + x + '" y="' + y + '" text-anchor="middle" font-size="10" font-family="Open Sans" fill="#3f554f"' +
    (turn ? ' transform="rotate(-90 ' + x + ' ' + y + ')"' : '') + '>' + value + '</text>';
}

// Horizontal ruler: centimetre numbers, half ticks and quarter dots.
(function () {
  var unit = 46.85, zero = 288;
  var s = '<rect x="169.500" y="6.500" width="986" height="12" fill="#b6dbff" stroke="#dbdbff"/><rect x="288" y="7" width="760" height="11" fill="#fff"/>';
  for (var q = -10; q <= 73; q++) {
    var x = zero + q * unit / 4;
    if (q % 4 === 0) {
      if (q !== 0) s += label(x, 16, Math.abs(q / 4));
    } else {
      var h = q % 2 === 0 ? 5 : 2;
      s += '<rect x="' + Math.round(x) + '" y="' + Math.round(12.5 - h / 2) + '" width="1" height="' + h + '" fill="#30504a"/>';
    }
  }
  for (var t = 1; t < 14; t++) s += '<rect x="' + Math.round(zero + t * 59.4) + '" y="21" width="1" height="3" fill="#8b91a2"/>';
  s += '<g fill="#dff0ff" stroke="#496eaa"><path d="M284.500 3.500H292.500V7L288.500 11 284.500 7ZM284.500 18.500V15L288.500 11 292.500 15V18.500ZM284.500 19.500H292.500V23.500H284.500ZM1044.500 18.500V14.500L1048.500 11 1052.500 14.500V18.500Z"/></g>';
  document.getElementById('hrule').innerHTML = s;
})();

// Vertical ruler, with its numbers turned to read upwards.
(function () {
  var unit = 46.75;
  var s = '<rect width="24" height="540" fill="#92b6ff"/><rect x="5" width="14" height="540" fill="#fff" stroke="#dbdbff"/>';
  for (var q = -1; q <= 44; q++) {
    var y = 20 + q * unit / 4;
    if (q % 4 === 0) s += label(16, y, 8 + q / 4, true);
    else {
      var w = q % 2 === 0 ? 5 : 2;
      s += '<rect x="' + Math.round(12 - w / 2) + '" y="' + Math.round(y) + '" width="' + w + '" height="1" fill="#30504a"/>';
    }
  }
  document.getElementById('vrule').innerHTML = s;
})();
```
